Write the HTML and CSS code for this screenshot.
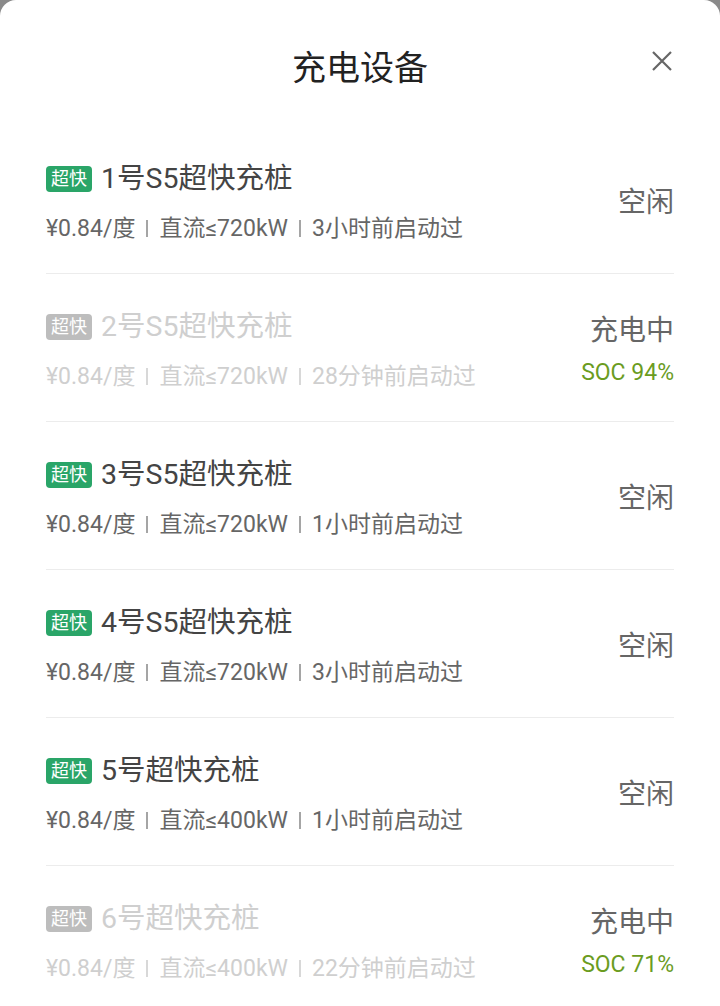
FILE: index.html
```html
<!DOCTYPE html>
<html lang="zh-CN">
<head>
  <meta charset="UTF-8">
  <meta name="viewport" content="width=device-width, initial-scale=1.0">
  <title>充电设备</title>
  <link rel="stylesheet" href="styles.css">
</head>
<body>
  <div class="sheet">
    <div class="sheet-header">
      <h1>充电设备</h1>
      <button class="close" aria-label="关闭">
        <svg width="22" height="22" viewBox="0 0 22 22"><path d="M2 2 L20 20 M20 2 L2 20" stroke="#666" stroke-width="2.2" fill="none"/></svg>
      </button>
    </div>

    <ul class="pile-list">
      <li class="pile">
        <div class="pile-info">
          <div class="pile-name"><span class="tag">超快</span>1号S5超快充桩</div>
          <div class="pile-meta">¥0.84/度<span class="sep"></span>直流≤720kW<span class="sep"></span>3小时前启动过</div>
        </div>
        <div class="pile-status">空闲</div>
      </li>
      <li class="pile busy">
        <div class="pile-info">
          <div class="pile-name"><span class="tag">超快</span>2号S5超快充桩</div>
          <div class="pile-meta">¥0.84/度<span class="sep"></span>直流≤720kW<span class="sep"></span>28分钟前启动过</div>
        </div>
        <div class="pile-status">充电中<span class="soc">SOC 94%</span></div>
      </li>
      <li class="pile">
        <div class="pile-info">
          <div class="pile-name"><span class="tag">超快</span>3号S5超快充桩</div>
          <div class="pile-meta">¥0.84/度<span class="sep"></span>直流≤720kW<span class="sep"></span>1小时前启动过</div>
        </div>
        <div class="pile-status">空闲</div>
      </li>
      <li class="pile">
        <div class="pile-info">
          <div class="pile-name"><span class="tag">超快</span>4号S5超快充桩</div>
          <div class="pile-meta">¥0.84/度<span class="sep"></span>直流≤720kW<span class="sep"></span>3小时前启动过</div>
        </div>
        <div class="pile-status">空闲</div>
      </li>
      <li class="pile">
        <div class="pile-info">
          <div class="pile-name"><span class="tag">超快</span>5号超快充桩</div>
          <div class="pile-meta">¥0.84/度<span class="sep"></span>直流≤400kW<span class="sep"></span>1小时前启动过</div>
        </div>
        <div class="pile-status">空闲</div>
      </li>
      <li class="pile busy">
        <div class="pile-info">
          <div class="pile-name"><span class="tag">超快</span>6号超快充桩</div>
          <div class="pile-meta">¥0.84/度<span class="sep"></span>直流≤400kW<span class="sep"></span>22分钟前启动过</div>
        </div>
        <div class="pile-status">充电中<span class="soc">SOC 71%</span></div>
      </li>
    </ul>
  </div>
</body>
</html>
```

FILE: styles.css
```css
html, body {
  margin: 0;
  height: 100%;
}
body {
  background: #8a8a8a;
  font-family: Roboto, "Noto Sans CJK SC", sans-serif;
  overflow: hidden;
}
.sheet {
  background: #fff;
  border-radius: 16px 16px 0 0;
  min-height: 100%;
}
.sheet-header {
  position: relative;
  height: 126px;
  display: flex;
  align-items: flex-start;
  justify-content: center;
}
.sheet-header h1 {
  margin: 46px 0 0;
  font-size: 34px;
  line-height: 44px;
  font-weight: normal;
  color: #222;
}
.close {
  position: absolute;
  top: 50px;
  right: 47px;
  padding: 0;
  border: none;
  background: none;
  line-height: 0;
}
.pile-list {
  list-style: none;
  margin: 0 46px;
  padding: 0;
}
.pile {
  display: flex;
  align-items: center;
  justify-content: space-between;
  height: 147px;
  border-bottom: 1px solid #ececec;
  box-sizing: content-box;
}
.pile-info {
  display: flex;
  flex-direction: column;
  gap: 16px;
  margin-top: 4px;
}
.pile-name {
  display: flex;
  align-items: center;
  font-size: 28.5px;
  line-height: 38px;
  color: #444;
}
.tag {
  display: inline-block;
  width: 46px;
  height: 26px;
  line-height: 26px;
  margin-right: 9px;
  border-radius: 4px;
  background: #2aa568;
  color: #fff;
  font-size: 18px;
  text-align: center;
}
.pile-meta {
  display: flex;
  align-items: center;
  font-size: 23px;
  line-height: 30px;
  color: #666;
}
.sep {
  display: inline-block;
  width: 2px;
  height: 17px;
  margin: 0 11px;
  background: #a5a5a5;
}
.pile-status {
  display: flex;
  flex-direction: column;
  align-items: flex-end;
  gap: 11px;
  margin-top: 6px;
  font-size: 28px;
  line-height: 34px;
  color: #666;
}
.soc {
  font-size: 23px;
  line-height: 28px;
  color: #6b9c1f;
}
.busy .pile-name,
.busy .pile-meta {
  color: #cfcfcf;
}
.busy .tag {
  background: #bdbdbd;
}
.busy .sep {
  background: #d8d8d8;
}
```
